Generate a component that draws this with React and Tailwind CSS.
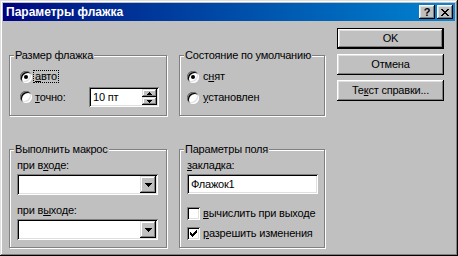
import React from "react";

function Px({ rows, color = "#000", className = "" }) {
  const w = rows[0].length;
  const h = rows.length;
  const rects = [];
  rows.forEach((r, y) =>
    r.split("").forEach((c, x) => {
      if (c === "X") rects.push(<rect key={x + "-" + y} x={x} y={y} width="1" height="1" fill={color} />);
    })
  );
  return (
    <svg width={w} height={h} viewBox={`0 0 ${w} ${h}`} shapeRendering="crispEdges" className={className}>
      {rects}
    </svg>
  );
}

const CLOSE = ["XX....XX", ".XX..XX.", "..XXXX..", "...XX...", "..XXXX..", ".XX..XX.", "XX....XX"];
const CHECK = ["......X", ".....XX", "X...XXX", "XX.XXX.", "XXXXX..", ".XXX...", "..X...."];
const DOWN = ["XXXXXXX", ".XXXXX.", "..XXX..", "...X..."];
const SUP = ["..X..", ".XXX.", "XXXXX"];
const SDOWN = ["XXXXX", ".XXX.", "..X.."];

function U({ children }) {
  return <span className="underline underline-offset-[1px]">{children}</span>;
}

function Radio({ checked }) {
  return (
    <span className="relative inline-block w-[12px] h-[12px] shrink-0 rounded-full bg-white shadow-[inset_1px_1px_0_#808080,inset_-1px_-1px_0_#fff,inset_2px_2px_0_#000,inset_-2px_-2px_0_#dfdfdf]">
      {checked && <span className="absolute left-[4px] top-[4px] w-[4px] h-[4px] rounded-full bg-black" />}
    </span>
  );
}

function Check({ checked }) {
  return (
    <span className="flex items-center justify-center w-[13px] h-[13px] shrink-0 bg-white shadow-[inset_1px_1px_0_#808080,inset_-1px_-1px_0_#fff,inset_2px_2px_0_#000,inset_-2px_-2px_0_#dfdfdf]">
      {checked && <Px rows={CHECK} />}
    </span>
  );
}

function Group({ title, children }) {
  return (
    <fieldset className="border border-[#808080] shadow-[1px_1px_0_#fff,inset_1px_1px_0_#fff] min-w-0">
      <legend className="ml-[4px] px-[1px] bg-[#c0c0c0] leading-[13px]">{title}</legend>
      {children}
    </fieldset>
  );
}

function Button({ children, def }) {
  return (
    <div
      className={
        "h-[21px] w-[107px] flex items-center justify-center " +
        (def
          ? "shadow-[inset_0_0_0_1px_#000,inset_-2px_-2px_0_#000,inset_2px_2px_0_#fff,inset_-3px_-3px_0_#808080,inset_3px_3px_0_#dfdfdf]"
          : "shadow-[inset_-1px_-1px_0_#000,inset_1px_1px_0_#fff,inset_-2px_-2px_0_#808080,inset_2px_2px_0_#dfdfdf]")
      }
    >
      {children}
    </div>
  );
}

function Combo() {
  return (
    <div className="h-[21px] bg-white flex justify-end p-[2px] shadow-[inset_1px_1px_0_#808080,inset_-1px_-1px_0_#fff,inset_2px_2px_0_#000,inset_-2px_-2px_0_#dfdfdf]">
      <div className="w-[16px] h-[17px] bg-[#c0c0c0] flex items-center justify-center shadow-[inset_-1px_-1px_0_#000,inset_1px_1px_0_#dfdfdf,inset_-2px_-2px_0_#808080,inset_2px_2px_0_#fff]">
        <Px rows={DOWN} />
      </div>
    </div>
  );
}

export default function App() {
  return (
    <div className="w-[458px] h-[256px] bg-[#c0c0c0] p-[3px] shadow-[inset_-1px_-1px_0_#000,inset_1px_1px_0_#dfdfdf,inset_-2px_-2px_0_#808080,inset_2px_2px_0_#fff] font-['Liberation_Sans',sans-serif] text-[11px] leading-[13px] tracking-[-0.2px] text-black select-none whitespace-nowrap">
      <div className="h-[18px] flex items-center bg-linear-to-r from-[#000080] to-[#1084d0] pl-[3px] pr-[2px]">
        <span className="text-white font-bold text-[12px] leading-[14px] tracking-normal">Параметры флажка</span>
        <div className="ml-auto flex gap-[2px]">
          <div className="w-[16px] h-[14px] bg-[#c0c0c0] flex items-center justify-center font-bold text-[11px] leading-[11px] shadow-[inset_-1px_-1px_0_#000,inset_1px_1px_0_#fff,inset_-2px_-2px_0_#808080,inset_2px_2px_0_#dfdfdf]">
            ?
          </div>
          <div className="w-[16px] h-[14px] bg-[#c0c0c0] flex items-center justify-center pr-[1px] shadow-[inset_-1px_-1px_0_#000,inset_1px_1px_0_#fff,inset_-2px_-2px_0_#808080,inset_2px_2px_0_#dfdfdf]">
            <Px rows={CLOSE} />
          </div>
        </div>
      </div>

      <div className="flex pl-[6px]">
        <div className="grid grid-cols-[158px_146px] gap-x-[12px] gap-y-[27px] pt-[28px]">
          <Group title="Размер флажка">
            <div className="pl-[10px] pr-[7px] pt-[8px] pb-[8px]">
              <div className="flex items-center h-[13px]">
                <Radio checked />
                <span className="ml-[1px] px-[1px] border border-dotted border-black leading-[11px]">
                  <U>а</U>вто
                </span>
              </div>
              <div className="flex items-center mt-[4px] h-[20px]">
                <Radio />
                <span className="ml-[3px]">
                  <U>т</U>очно:
                </span>
                <div className="ml-auto w-[70px] h-[20px] bg-white flex items-center pl-[4px] pr-[2px] shadow-[inset_1px_1px_0_#808080,inset_-1px_-1px_0_#fff,inset_2px_2px_0_#000,inset_-2px_-2px_0_#dfdfdf]">
                  <span>10 пт</span>
                  <div className="ml-auto flex flex-col">
                    <div className="w-[15px] h-[8px] bg-[#c0c0c0] flex items-center justify-center shadow-[inset_-1px_-1px_0_#000,inset_1px_1px_0_#dfdfdf,inset_-2px_-2px_0_#808080,inset_2px_2px_0_#fff]">
                      <Px rows={SUP} />
                    </div>
                    <div className="w-[15px] h-[8px] bg-[#c0c0c0] flex items-center justify-center shadow-[inset_-1px_-1px_0_#000,inset_1px_1px_0_#dfdfdf,inset_-2px_-2px_0_#808080,inset_2px_2px_0_#fff]">
                      <Px rows={SDOWN} />
                    </div>
                  </div>
                </div>
              </div>
            </div>
          </Group>

          <Group title="Состояние по умолчанию">
            <div className="pl-[7px] pt-[8px]">
              <div className="flex items-center h-[13px]">
                <Radio checked />
                <span className="ml-[4px]">
                  с<U>н</U>ят
                </span>
              </div>
              <div className="flex items-center mt-[8px] h-[13px]">
                <Radio />
                <span className="ml-[4px]">
                  <U>у</U>становлен
                </span>
              </div>
            </div>
          </Group>

          <Group title="Выполнить макрос">
            <div className="pl-[7px] pr-[8px] pt-[3px] pb-[7px]">
              <div>
                при в<U>х</U>оде:
              </div>
              <div className="mt-[2px]">
                <Combo />
              </div>
              <div className="mt-[9px]">
                при в<U>ы</U>ходе:
              </div>
              <div className="mt-[2px]">
                <Combo />
              </div>
            </div>
          </Group>

          <Group title="Параметры поля">
            <div className="pl-[7px] pr-[6px] pt-[3px]">
              <div>
                <U>з</U>акладка:
              </div>
              <div className="mt-[2px] h-[20px] bg-white flex items-center pl-[4px] shadow-[inset_1px_1px_0_#808080,inset_-1px_-1px_0_#fff,inset_2px_2px_0_#000,inset_-2px_-2px_0_#dfdfdf]">
                Флажок1
              </div>
              <div className="flex items-center mt-[13px] h-[13px]">
                <Check />
                <span className="ml-[3px]">
                  <U>в</U>ычислить при выходе
                </span>
              </div>
              <div className="flex items-center mt-[7px] h-[13px]">
                <Check checked />
                <span className="ml-[3px]">
                  <U>р</U>азрешить изменения
                </span>
              </div>
            </div>
          </Group>
        </div>

        <div className="ml-[12px] pt-[7px] flex flex-col gap-[5px]">
          <Button def>OK</Button>
          <Button>Отмена</Button>
          <Button>
            Те<U>к</U>ст справки...
          </Button>
        </div>
      </div>
    </div>
  );
}
